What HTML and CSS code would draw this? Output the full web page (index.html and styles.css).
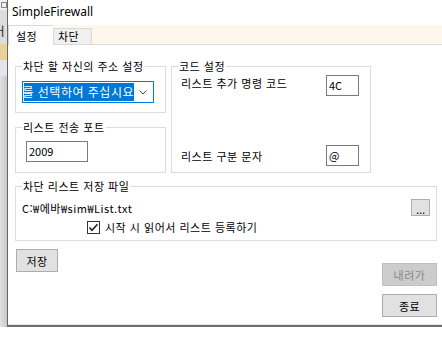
FILE: index.html
```html
<!DOCTYPE html>
<html lang="ko">
<head>
    <meta charset="UTF-8">
    <meta name="viewport" content="width=device-width, initial-scale=1.0">
    <title>SimpleFirewall</title>
    <link rel="stylesheet" href="styles.css">
</head>
<body>
    <div class="desk">
        <div class="behind">
            <div class="behind-icon"><span></span></div>
            <div class="behind-text">ㅓ</div>
            <div class="behind-hl"></div>
            <div class="behind-light"></div>
            <div class="behind-rest"></div>
        </div>

        <div class="window">
            <div class="titlebar">SimpleFirewall</div>

            <div class="tabs">
                <div class="tab tab-active">설정</div>
                <div class="tab">차단</div>
            </div>

            <div class="page">
                <div class="groups">
                    <fieldset class="group group-addr">
                        <legend>차단 할 자신의 주소 설정</legend>
                        <div class="group-body">
                            <div class="combo">
                                <div class="combo-text"><span>를 선택하여 주십시요</span></div>
                                <svg class="combo-arrow" width="8" height="5" viewBox="0 0 8 5">
                                    <polyline points="0.5,0.5 4,4 7.5,0.5" fill="none" stroke="#444" stroke-width="1"/>
                                </svg>
                            </div>
                        </div>
                    </fieldset>

                    <fieldset class="group group-port">
                        <legend>리스트 전송 포트</legend>
                        <div class="group-body">
                            <div class="field field-port">2009</div>
                        </div>
                    </fieldset>

                    <fieldset class="group group-code">
                        <legend>코드 설정</legend>
                        <div class="group-body">
                            <div class="code-row">
                                <div class="code-label code-label-top">리스트 추가 명령 코드</div>
                                <div class="field field-code">4C</div>
                            </div>
                            <div class="code-row">
                                <div class="code-label code-label-bottom">리스트 구분 문자</div>
                                <div class="field field-code">@</div>
                            </div>
                        </div>
                    </fieldset>
                </div>

                <fieldset class="group group-file">
                    <legend>차단 리스트 저장 파일</legend>
                    <div class="group-body">
                        <div class="file-row">
                            <span class="file-path">C:₩에바₩sim₩List.txt</span>
                            <button class="btn btn-browse">...</button>
                        </div>
                        <div class="check-row">
                            <svg class="checkbox" width="13" height="13" viewBox="0 0 13 13">
                                <rect x="0.5" y="0.5" width="12" height="12" fill="#fff" stroke="#333"/>
                                <polyline points="2.5,6.5 5,9.2 10.5,3.2" fill="none" stroke="#222" stroke-width="1.6"/>
                            </svg>
                            <span>시작 시 읽어서 리스트 등록하기</span>
                        </div>
                    </div>
                </fieldset>

                <div class="actions">
                    <button class="btn btn-save">저장</button>
                    <div class="actions-right">
                        <button class="btn btn-side" disabled>내려가</button>
                        <button class="btn btn-side">종료</button>
                    </div>
                </div>
            </div>
        </div>
    </div>
</body>
</html>
```

FILE: styles.css
```css
* {
    box-sizing: border-box;
}
body {
    margin: 0;
    width: 442px;
    height: 341px;
    overflow: hidden;
    background: #fff;
    color: #000;
    font-family: "Noto Sans CJK KR", sans-serif;
    font-size: 11px;
    line-height: 14px;
    letter-spacing: 0.5px;
}
.desk {
    display: flex;
    height: 327px;
}

/* 뒤쪽 창 */
.behind {
    width: 7px;
    display: flex;
    flex-direction: column;
    overflow: hidden;
}
.behind-icon {
    height: 10px;
    background: #f2f2f2;
    padding: 2px 0 0 1px;
}
.behind-icon span {
    display: block;
    width: 6px;
    height: 6px;
    border: 1px solid #8a8a8a;
}
.behind-text {
    height: 34px;
    background: #dcdcdc;
    padding-top: 14px;
    margin-left: -4px;
    color: #222;
    font-size: 12px;
    line-height: 14px;
}
.behind-hl {
    height: 16px;
    background: #ead294;
}
.behind-light {
    height: 16px;
    background: #e4e4ea;
}
.behind-rest {
    flex: 1;
    background: linear-gradient(to right, #e2e2e2, #c8c8c8);
}

/* 창 */
.window {
    flex: 1;
    display: flex;
    flex-direction: column;
    background: #fff;
    border-left: 1px solid #666;
    border-bottom: 2px solid #6e6e6e;
}
.titlebar {
    height: 25px;
    padding-left: 4px;
    font-family: "Noto Sans", sans-serif;
    font-size: 12px;
    line-height: 24px;
    letter-spacing: 0;
}
.tabs {
    height: 20px;
    display: flex;
    align-items: flex-end;
    background: #fdf8eb;
    border-bottom: 1px solid #d9d9d9;
}
.tab {
    height: 16px;
    width: 39px;
    padding-left: 4px;
    background: #f0f0f0;
    border: 1px solid #d9d9d9;
    border-bottom: none;
    line-height: 14px;
}
.tab-active {
    height: 20px;
    width: 45px;
    margin-bottom: -1px;
    padding-left: 7px;
    padding-top: 3px;
    background: #fff;
    border-right: none;
}

/* 탭 페이지 */
.page {
    flex: 1;
    padding: 15px 5px 0 7px;
    border-bottom: 1px solid #e4e4e4;
}
.groups {
    display: grid;
    grid-template-columns: 151px 200px;
    column-gap: 5px;
    row-gap: 8px;
}
.group {
    margin: 0;
    padding: 0;
    min-width: 0;
    border: 1px solid #dcdcdc;
}
.group legend {
    margin-left: 6px;
    padding: 0 1px;
    line-height: 12px;
}
.group-addr .group-body {
    padding: 9px 0 9px 6px;
}
.group-port .group-body {
    padding: 8px 0 10px 10px;
}
.group-code {
    grid-column: 2;
    grid-row: 1 / 3;
}
.group-code .group-body {
    height: 100px;
    padding: 3px 11px 6px 9px;
    display: flex;
    flex-direction: column;
    justify-content: space-between;
}

/* 콤보박스 */
.combo {
    width: 132px;
    height: 22px;
    border: 1px solid #0078d7;
    padding: 1px;
    display: flex;
    align-items: center;
}
.combo-text {
    width: 110px;
    height: 18px;
    background: #0078d7;
    color: #fff;
    display: flex;
    justify-content: flex-end;
    overflow: hidden;
    white-space: nowrap;
    font-size: 12px;
    line-height: 18px;
    letter-spacing: 0.5px;
}
.combo-arrow {
    margin-left: auto;
    margin-right: 5px;
}

.field {
    height: 21px;
    border: 1px solid #7a7a7a;
    padding: 0 2px;
    line-height: 19px;
    background: #fff;
    letter-spacing: 0;
}
.field-port {
    width: 62px;
}
.field-code {
    width: 33px;
}
.code-row {
    display: flex;
    justify-content: space-between;
    align-items: flex-start;
}
.code-label-top {
    padding-top: 1px;
}
.code-label-bottom {
    padding-top: 4px;
}

/* 파일 */
.group-file {
    margin-top: 7px;
}
.group-file .group-body {
    padding: 7px 6px 6px 6px;
}
.file-row {
    height: 17px;
    display: flex;
    justify-content: space-between;
    align-items: center;
}
.check-row {
    height: 14px;
    margin-top: 4px;
    padding-left: 65px;
    display: flex;
    align-items: center;
    gap: 5px;
}

/* 버튼 */
.btn {
    padding: 0;
    font-family: inherit;
    font-size: 11px;
    line-height: 14px;
    letter-spacing: 0.5px;
    color: #000;
    background: #e1e1e1;
    border: 1px solid #adadad;
}
.btn:disabled {
    background: #cccccc;
    border-color: #bfbfbf;
    color: #8a8a8a;
}
.btn-browse {
    width: 19px;
    height: 17px;
    line-height: 18px;
    letter-spacing: 0;
}
.actions {
    display: flex;
    justify-content: space-between;
    align-items: flex-start;
}
.btn-save {
    width: 42px;
    height: 23px;
    margin-top: 8px;
    margin-left: 1px;
}
.actions-right {
    margin-top: 22px;
    display: flex;
    flex-direction: column;
    gap: 8px;
}
.btn-side {
    width: 55px;
    height: 23px;
}
```
